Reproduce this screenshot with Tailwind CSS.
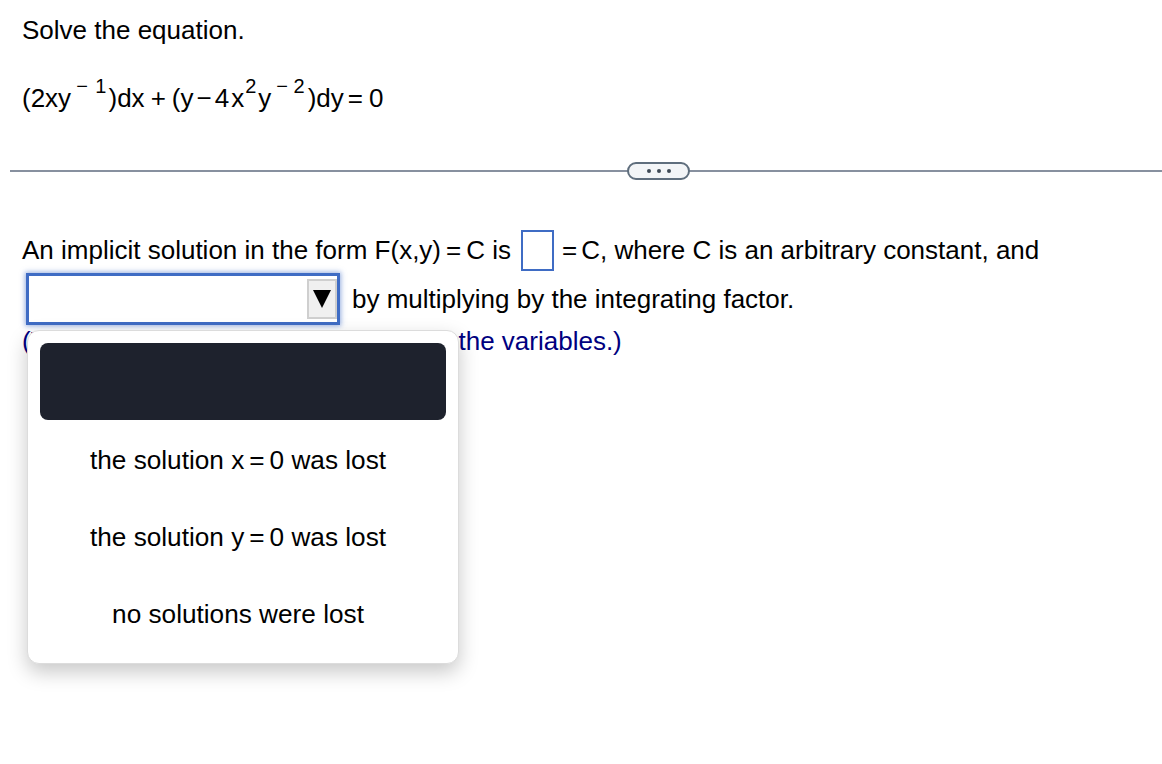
<!DOCTYPE html>
<html>
<head>
<meta charset="utf-8">
<script src="https://cdn.jsdelivr.net/npm/@tailwindcss/browser@4"></script>
</head>
<body class="bg-white">
<div class="relative w-[1162px] h-[764px] overflow-hidden bg-white text-black font-['Liberation_Sans',Arial,sans-serif] text-[26px]">
  <div class="pl-[22px] pt-[15px] h-[66px] leading-[30px]">Solve the equation.</div>
  <div class="pl-[22px] h-[88px] leading-[34px] pt-[15px] text-[26px] whitespace-nowrap">(2xy<span class="ml-[5px] align-[14px] text-[20px] leading-[0]">−<span class="ml-[2px]"> 1</span></span><span class="ml-[2px]">)dx</span><span class="mx-[6px]">+</span>(y<span class="ml-[3px]">−</span><span class="ml-[3px]">4</span><span class="ml-[2px]">x</span><span class="ml-[1px] align-[14px] text-[20px] leading-[0]">2</span><span class="ml-[2px]">y</span><span class="ml-[5px] align-[14px] text-[20px] leading-[0]">− 2</span><span class="ml-[3px]">)dy</span><span class="ml-[4px] mr-[6px]">=</span>0</div>

  <div class="relative ml-[10px] mt-[8px] h-[18px] flex items-center">
    <div class="w-full h-[2px] bg-[#87909f]"></div>
    <div class="absolute left-[617px] top-0 w-[63px] h-[18px] rounded-[9px] border-2 border-[#5f6e7d] bg-[#f3f5f7] flex items-center justify-center gap-[6px]">
      <span class="w-[4px] h-[4px] rounded-full bg-[#3f4a55]"></span>
      <span class="w-[4px] h-[4px] rounded-full bg-[#3f4a55]"></span>
      <span class="w-[4px] h-[4px] rounded-full bg-[#3f4a55]"></span>
    </div>
  </div>

  <div class="pl-[22px] mt-[50px] h-[41px] flex items-center whitespace-nowrap">
    <span>An implicit solution in the form F(x,y)<span class="mx-[5px]">=</span>C is</span>
    <span class="inline-block ml-[10px] mr-[8px] w-[33px] h-[41px] border-2 border-[#3f6cc4] bg-white"></span>
    <span><span class="mr-[4px]">=</span>C, where C is an arbitrary constant, and</span>
  </div>

  <div class="pl-[26px] mt-[2px] h-[52px] flex items-center whitespace-nowrap">
    <div class="relative w-[314px] h-[52px] border-[3px] border-[#3f6cc4] bg-white shadow-[0_0_5px_1px_rgba(63,108,196,0.55)] flex justify-end items-center">
      <div class="w-[30px] h-[40px] border-2 border-[#cfcfcf] bg-[#f0f0f0] flex items-center justify-center">
        <svg width="18" height="18" viewBox="0 0 18 18"><polygon points="0,0 18,0 9,18" fill="#000"/></svg>
      </div>
    </div>
    <span class="ml-[12px]">by multiplying by the integrating factor.</span>
  </div>

  <div class="pl-[22px] h-[36px] leading-[32px] text-[#00007f] whitespace-nowrap">(Type an expression using x and y as the variables.)</div>

  <div class="absolute left-[27px] top-[330px] w-[432px] h-[334px] rounded-[12px] bg-white border border-[#dcdcdc] shadow-[0_8px_20px_rgba(0,0,0,0.22)] pt-[12px] pl-[12px] pr-[12px] text-[26.2px]">
    <div class="w-[406px] h-[77px] rounded-[8px] bg-[#1e222d]"></div>
    <div class="w-[396px] h-[77px] pt-[4px] flex items-center justify-center">the solution x<span class="mx-[5px]">=</span>0 was lost</div>
    <div class="w-[396px] h-[77px] pt-[4px] flex items-center justify-center">the solution y<span class="mx-[5px]">=</span>0 was lost</div>
    <div class="w-[396px] h-[77px] pt-[4px] flex items-center justify-center">no solutions were lost</div>
  </div>
</div>
</body>
</html>
